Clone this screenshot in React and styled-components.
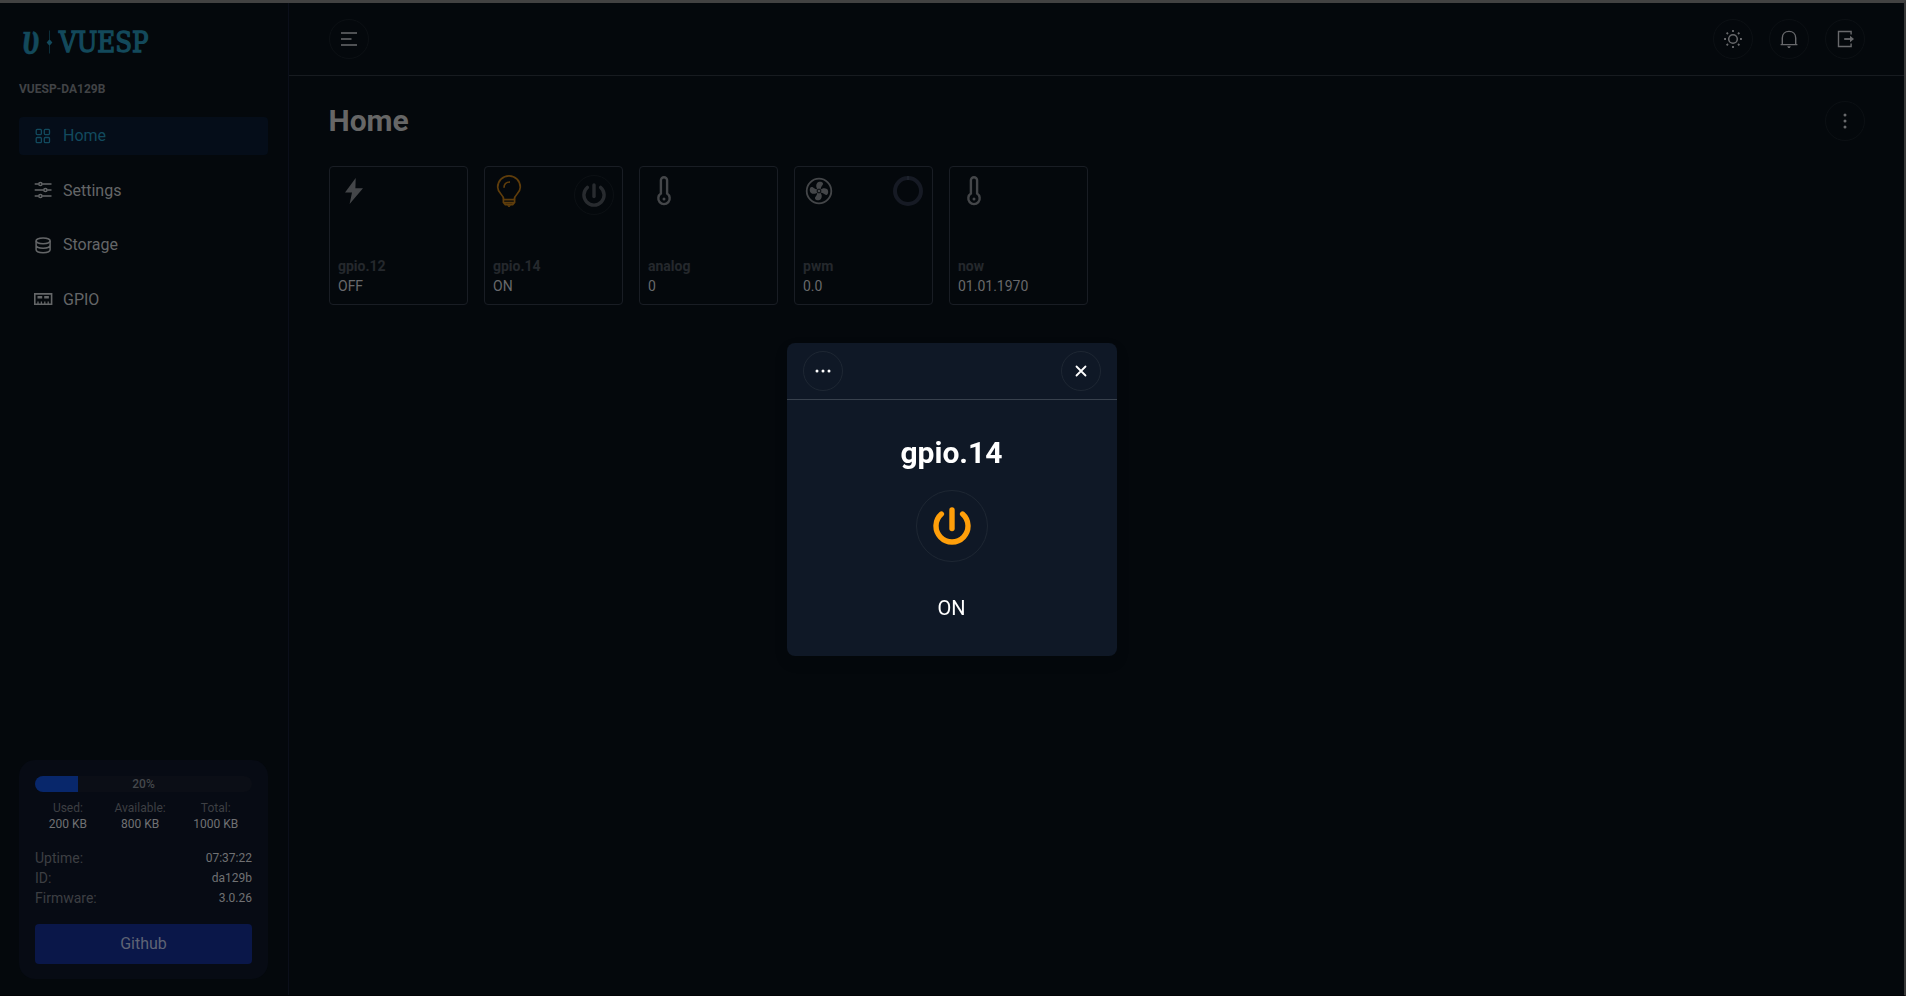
import React from "react";
import styled, { createGlobalStyle } from "styled-components";

const Global = createGlobalStyle`
  *, *::before, *::after { box-sizing: border-box; }
  body { margin: 0; background: #04080c; font-family: Roboto, "Liberation Sans", sans-serif; color: #666668; }
  h1, h2, p { margin: 0; }
  svg { display: block; flex: none; }
`;

const Frame = styled.div`
  height: 996px;
  border-top: 3px solid #424242;
  border-right: 2px solid #383838;
  border-bottom: 1px solid #020306;
  display: flex;
  overflow: hidden;
  background: #04080c;
`;

const Sidebar = styled.aside`
  width: 289px;
  flex: none;
  padding: 20px 20px 16px 19px;
  border-right: 1px solid #0b0f1a;
  display: flex;
  flex-direction: column;
`;

const Logo = styled.svg`
  width: 140px;
  height: 40px;
  overflow: visible;
`;

const DeviceName = styled.div`
  margin-top: 18px;
  font-size: 12px;
  line-height: 16px;
  font-weight: 700;
  color: #414346;
`;

const Nav = styled.nav`
  margin-top: 19.8px;
  display: flex;
  flex-direction: column;
  gap: 16px;
`;

const NavItem = styled.a`
  height: 38.4px;
  padding: 0 12px;
  border-radius: 4px;
  display: flex;
  align-items: center;
  gap: 8px;
  font-size: 16px;
  color: ${(p) => (p.$active ? "#124a5e" : "#646668")};
  background: ${(p) => (p.$active ? "#050d19" : "transparent")};
`;

const InfoCard = styled.section`
  margin-top: auto;
  height: 219px;
  padding: 16px 16px 15px;
  border-radius: 16px;
  background: #070b14;
  display: flex;
  flex-direction: column;
`;

const Progress = styled.div`
  height: 16px;
  flex: none;
  border-radius: 8px;
  overflow: hidden;
  background: #0b0e16;
  display: grid;
  align-items: center;
`;

const ProgressFill = styled.div`
  grid-area: 1 / 1;
  height: 100%;
  background: #08276b;
`;

const ProgressLabel = styled.span`
  grid-area: 1 / 1;
  text-align: center;
  font-size: 12px;
  line-height: 16px;
  font-weight: 500;
  color: #45484c;
`;

const Stats = styled.div`
  margin-top: 8px;
  display: flex;
  justify-content: space-around;
  font-size: 12px;
  line-height: 16px;
  text-align: center;
`;

const Muted = styled.div`
  color: #3d3f43;
`;

const Strong = styled.div`
  color: #707173;
`;

const Rows = styled.div`
  margin-top: 16px;
`;

const Row = styled.div`
  height: 20px;
  display: flex;
  justify-content: space-between;
  align-items: center;
  font-size: 14px;

  ${Strong} { font-size: 12px; }
`;

const GithubButton = styled.button`
  margin-top: auto;
  height: 40px;
  flex: none;
  padding: 0 0 1px;
  border: 0;
  border-radius: 4px;
  background: #0a1749;
  color: #5f6475;
  font: 16px Roboto, sans-serif;
`;

const Main = styled.main`
  flex: 1;
  min-width: 0;
`;

const TopBar = styled.header`
  height: 73px;
  padding: 0 39px 0 40px;
  border-bottom: 1px solid #171b20;
  display: flex;
  align-items: center;
  justify-content: space-between;
`;

const Actions = styled.div`
  display: flex;
  gap: 16px;
`;

const RoundButton = styled.button`
  width: ${(p) => p.$size || 40}px;
  height: ${(p) => p.$size || 40}px;
  flex: none;
  padding: 0;
  border: 1px solid ${(p) => p.$line || "#0c1014"};
  border-radius: 50%;
  background: transparent;
  color: ${(p) => p.$tone || "#68696c"};
  display: grid;
  place-items: center;
`;

const TitleRow = styled.div`
  margin-top: 25px;
  padding: 0 39px 0 39.5px;
  display: flex;
  align-items: center;
  justify-content: space-between;
`;

const PageTitle = styled.h1`
  font-size: 30px;
  line-height: 36px;
  font-weight: 700;
  color: #666;
`;

const Cards = styled.div`
  margin-top: 25px;
  padding-left: 40px;
  display: flex;
  gap: 16px;
`;

const Card = styled.article`
  width: 139px;
  height: 139px;
  padding: 8px;
  border: 1px solid #191d24;
  border-radius: 4px;
  display: flex;
  flex-direction: column;
  justify-content: space-between;
  font-size: 14px;
  line-height: 20px;
`;

const CardTop = styled.div`
  display: flex;
  justify-content: space-between;
  align-items: flex-start;
  color: ${(p) => p.$tone || "#444649"};
`;

const CardName = styled.div`
  font-weight: 700;
  color: #25282d;
`;

const CardValue = styled.div`
  color: #68696b;
`;

const Overlay = styled.div`
  position: fixed;
  inset: 3px 2px 0 0;
  display: grid;
  place-items: center;
`;

const Dialog = styled.section`
  width: 330px;
  height: 313px;
  border-radius: 8px;
  background: #0f1826;
  color: #fff;
  box-shadow: 0 6px 14px rgba(0, 0, 0, 0.12);
  display: flex;
  flex-direction: column;
  align-items: center;
`;

const DialogBar = styled.div`
  align-self: stretch;
  height: 57px;
  padding: 0 16px;
  border-bottom: 1px solid #38414d;
  display: flex;
  align-items: center;
  justify-content: space-between;
`;

const DialogTitle = styled.h2`
  margin: 35px 0 19px;
  padding-right: 1px;
  font-size: 30px;
  line-height: 36px;
  font-weight: 700;
`;

const DialogValue = styled.p`
  margin-top: 31px;
  padding-right: 1px;
  font-size: 20px;
  line-height: 30px;
`;

const Svg = ({ size = 18, box = 18, children, ...rest }) => (
  <svg width={size} height={size} viewBox={`0 0 ${box} ${box}`} fill="none" stroke="currentColor" {...rest}>
    {children}
  </svg>
);

const GridIcon = () => (
  <Svg size={24} box={24} strokeWidth="1.3">
    <rect x="5.2" y="5.4" width="5.2" height="5.2" rx="1" />
    <rect x="13.3" y="5.4" width="5.2" height="5.2" rx="1" />
    <rect x="5.2" y="13.5" width="5.2" height="5.2" rx="1" />
    <rect x="13.3" y="13.5" width="5.2" height="5.2" rx="1" />
  </Svg>
);

const SlidersIcon = () => (
  <Svg size={24} box={24} strokeWidth="1.5">
    <path d="M3.7 6H7.6M11.2 6H20.5M3.7 12H12.6M16.2 12H20.5M3.7 18H7.6M11.2 18H20.5" />
    <circle cx="9.4" cy="6" r="1.6" />
    <circle cx="14.4" cy="12" r="1.6" />
    <circle cx="9.4" cy="18" r="1.6" />
  </Svg>
);

const DatabaseIcon = () => (
  <Svg size={24} box={24} strokeWidth="1.5">
    <ellipse cx="12.1" cy="7.8" rx="7" ry="2.9" />
    <path d="M5.1 7.8V16.8C5.1 18.4 8.2 19.7 12.1 19.7S19.1 18.4 19.1 16.8V7.8M5.1 12.3C5.1 13.9 8.2 15.2 12.1 15.2S19.1 13.9 19.1 12.3" />
  </Svg>
);

const BoardIcon = () => (
  <Svg size={24} box={24} strokeWidth="1.6">
    <path d="M3.8 6.9H20.6V17.3H3.8Z" />
    <path d="M6.5 10.3H11.2M13.2 10.3H17.9" strokeWidth="2.4" />
    <path d="M7 14.4V17M10.4 14.4V17M13.8 14.4V17M17.2 14.4V17" strokeWidth="1.3" />
  </Svg>
);

const MenuIcon = () => (
  <Svg strokeWidth="1.7">
    <path d="M1 3H17M1 9H11.5M1 15H17" />
  </Svg>
);

const SunIcon = () => (
  <Svg strokeWidth="1.5">
    <circle cx="9" cy="9" r="4.3" />
    <path d="M9 .1V2M9 16V17.9M.1 9H2M16 9H17.9M2.6 2.6L4 4M14 14L15.4 15.4M2.6 15.4L4 14M14 4L15.4 2.6" strokeWidth="1.8" />
  </Svg>
);

const BellIcon = () => (
  <Svg strokeWidth="1.4">
    <path d="M2.3 14.5V8C2.3 4 5.1 1.4 9 1.4S15.7 4 15.7 8V14.5M.6 14.6H17.4" />
    <path d="M7.2 16.3H10.8L9.8 18H8.2Z" fill="currentColor" stroke="none" />
  </Svg>
);

const LogoutIcon = () => (
  <Svg strokeWidth="1.4">
    <path d="M15.1 4.4V1.5H2.5V16.5H15.1V13.6" />
    <path d="M8.2 9H14.5" strokeWidth="1.8" />
    <path d="M14 5.8L18 9L14 12.2Z" fill="currentColor" stroke="none" />
  </Svg>
);

const DotsIcon = ({ vertical }) => (
  <Svg fill="currentColor" stroke="none">
    {[3, 9, 15].map((n) => (
      <circle key={n} cx={vertical ? 9 : n} cy={vertical ? n : 9} r="1.5" />
    ))}
  </Svg>
);

const CloseIcon = () => (
  <Svg strokeWidth="1.8" strokeLinecap="round">
    <path d="M4.5 4.5L13.5 13.5M13.5 4.5L4.5 13.5" />
  </Svg>
);

const PowerIcon = ({ size }) => (
  <Svg size={size} box={38} strokeWidth="5.4" strokeLinecap="round">
    <path d="M19 3V21.5" />
    <path d="M8.4 7A16 16 0 1 0 29.6 7" />
  </Svg>
);

const BoltIcon = () => (
  <Svg size={32} box={32} fill="currentColor" stroke="none">
    <path d="M17.7 3L7 17.4H14L11.6 29L25 13.2H17.4Z" />
  </Svg>
);

const BulbIcon = () => (
  <Svg size={32} box={32} strokeWidth="1.7">
    <path d="M10.7 24.4C10.7 19.3 4.7 18.4 4.7 12.2A11.3 11.3 0 0 1 27.3 12.2C27.3 18.4 21.3 19.3 21.3 24.4" />
    <path d="M10.4 24.7H21.6V27.4L19.7 29.6H12.3L10.4 27.4ZM11 27.6H21" />
    <path d="M14 30.3H18L16.5 32H15.5Z" fill="currentColor" stroke="none" />
    <path d="M11 12.8C11 9.4 13.1 7.1 17 7" />
  </Svg>
);

const ThermometerIcon = () => (
  <Svg size={32} box={32} strokeWidth="2.4">
    <path d="M12.9 18.6V5.3A3.1 3.1 0 0 1 19.1 5.3V18.6A5.7 5.7 0 1 1 12.9 18.6Z" />
    <circle cx="16" cy="24" r="1.5" fill="currentColor" stroke="none" />
  </Svg>
);

const FanIcon = () => (
  <Svg size={32} box={32}>
    <circle cx="16" cy="16" r="12.3" strokeWidth="1.8" />
    <g fill="currentColor" stroke="none">
      {[0, 90, 180, 270].map((a) => (
        <path key={a} transform={`rotate(${a} 16 16)`} d="M14.8 14.6C13.2 13 12.5 10.2 14.1 8C15.3 6.3 19.8 6.3 20 8.6C20.2 10.4 18 10.8 17.6 14.8L16 16Z" />
      ))}
    </g>
    <circle cx="16" cy="16" r="1.9" fill="currentColor" stroke="#04080c" strokeWidth="1" />
  </Svg>
);

const RingGauge = () => (
  <Svg size={32} box={32} strokeWidth="4">
    <circle cx="16" cy="16" r="13" stroke="#161a24" />
    <path d="M16 1V5" stroke="#29313b" strokeWidth=".8" />
  </Svg>
);

const nav = [
  ["Home", GridIcon, true],
  ["Settings", SlidersIcon],
  ["Storage", DatabaseIcon],
  ["GPIO", BoardIcon],
];

const usage = [["Used:", "200 KB"], ["Available:", "800 KB"], ["Total:", "1000 KB"]];
const details = [["Uptime:", "07:37:22"], ["ID:", "da129b"], ["Firmware:", "3.0.26"]];

const TogglePower = () => (
  <RoundButton $tone="#282b2f"><PowerIcon size={24} /></RoundButton>
);

const widgets = [
  { name: "gpio.12", value: "OFF", Icon: BoltIcon },
  { name: "gpio.14", value: "ON", Icon: BulbIcon, tone: "#5f3d0b", Control: TogglePower },
  { name: "analog", value: "0", Icon: ThermometerIcon },
  { name: "pwm", value: "0.0", Icon: FanIcon, Control: RingGauge },
  { name: "now", value: "01.01.1970", Icon: ThermometerIcon },
];

const Brand = () => (
  <Logo viewBox="0 0 140 40" fill="#13495b">
    <text transform="translate(3.2 30.8) scale(.72 1)" fontFamily="Liberation Serif, serif" fontWeight="700" fontStyle="italic" fontSize="49" stroke="#13495b" strokeWidth=".5">υ</text>
    <path d="M30.2 7.5H30.8V30.5H30.2ZM30.5 16.2L33.4 19.5L30.5 22.8L27.6 19.5Z" />
    <text x="40" y="29" fontFamily="DejaVu Serif, serif" fontSize="28" textLength="89.5" lengthAdjust="spacingAndGlyphs" stroke="#13495b" strokeWidth="1.4">VUESP</text>
  </Logo>
);

export default function App() {
  return (
    <>
      <Global />
      <Frame>
        <Sidebar>
          <Brand />
          <DeviceName>VUESP-DA129B</DeviceName>
          <Nav>
            {nav.map(([label, Icon, active]) => (
              <NavItem key={label} $active={active}><Icon />{label}</NavItem>
            ))}
          </Nav>
          <InfoCard>
            <Progress>
              <ProgressFill style={{ width: "20%" }} />
              <ProgressLabel>20%</ProgressLabel>
            </Progress>
            <Stats>
              {usage.map(([label, value]) => (
                <div key={label}><Muted>{label}</Muted><Strong>{value}</Strong></div>
              ))}
            </Stats>
            <Rows>
              {details.map(([label, value]) => (
                <Row key={label}><Muted>{label}</Muted><Strong>{value}</Strong></Row>
              ))}
            </Rows>
            <GithubButton>Github</GithubButton>
          </InfoCard>
        </Sidebar>
        <Main>
          <TopBar>
            <RoundButton><MenuIcon /></RoundButton>
            <Actions>
              <RoundButton><SunIcon /></RoundButton>
              <RoundButton><BellIcon /></RoundButton>
              <RoundButton><LogoutIcon /></RoundButton>
            </Actions>
          </TopBar>
          <TitleRow>
            <PageTitle>Home</PageTitle>
            <RoundButton><DotsIcon vertical /></RoundButton>
          </TitleRow>
          <Cards>
            {widgets.map(({ name, value, Icon, tone, Control }) => (
              <Card key={name}>
                <CardTop $tone={tone}><Icon />{Control && <Control />}</CardTop>
                <div><CardName>{name}</CardName><CardValue>{value}</CardValue></div>
              </Card>
            ))}
          </Cards>
        </Main>
      </Frame>
      <Overlay>
        <Dialog>
          <DialogBar>
            <RoundButton $line="#1e2733" $tone="#fff"><DotsIcon /></RoundButton>
            <RoundButton $line="#1e2733" $tone="#fff"><CloseIcon /></RoundButton>
          </DialogBar>
          <DialogTitle>gpio.14</DialogTitle>
          <RoundButton $size={72} $line="#1e2733" $tone="#ff9f0a"><PowerIcon size={38} /></RoundButton>
          <DialogValue>ON</DialogValue>
        </Dialog>
      </Overlay>
    </>
  );
}
